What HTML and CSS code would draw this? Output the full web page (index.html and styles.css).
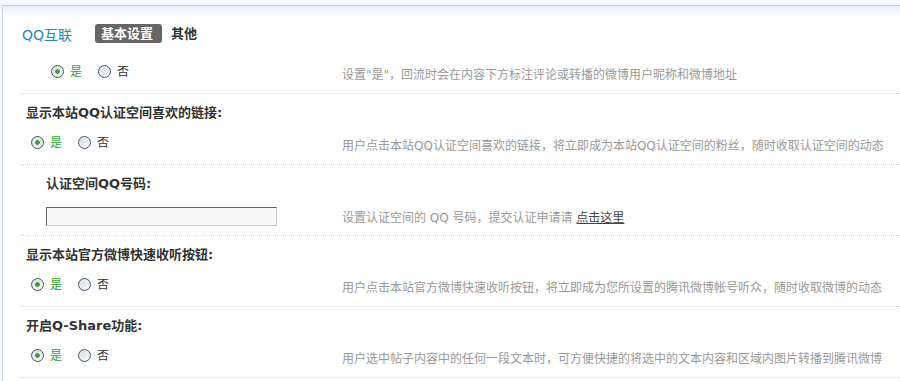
FILE: index.html
```html
<!DOCTYPE html>
<html lang="zh-cn">
  <head>
    <meta charset="utf-8">
    <title>QQ互联 - 基本设置</title>
    <link rel="stylesheet" href="styles.css">
  </head>
  <body>
    <div class="panel">
      <div class="head">
        <span class="title">QQ互联</span>
        <a class="tab current" href="#">基本设置</a>
        <a class="tab" href="#">其他</a>
      </div>

      <div class="item sub nolabel">
        <div class="row">
          <div class="ctrl">
            <label class="yes"><input type="radio" name="feed" checked>是</label>
            <label><input type="radio" name="feed">否</label>
          </div>
          <div class="tip">设置"是"，回流时会在内容下方标注评论或转播的微博用户昵称和微博地址</div>
        </div>
      </div>

      <div class="item">
        <div class="label">显示本站QQ认证空间喜欢的链接:</div>
        <div class="row">
          <div class="ctrl">
            <label class="yes"><input type="radio" name="like" checked>是</label>
            <label><input type="radio" name="like">否</label>
          </div>
          <div class="tip">用户点击本站QQ认证空间喜欢的链接，将立即成为本站QQ认证空间的粉丝，随时收取认证空间的动态</div>
        </div>
      </div>

      <div class="item sub">
        <div class="label">认证空间QQ号码:</div>
        <div class="row field">
          <div class="ctrl">
            <input class="txt" type="text" name="qq">
          </div>
          <div class="tip">设置认证空间的 QQ 号码，提交认证申请请 <a href="#">点击这里</a></div>
        </div>
      </div>

      <div class="item">
        <div class="label">显示本站官方微博快速收听按钮:</div>
        <div class="row">
          <div class="ctrl">
            <label class="yes"><input type="radio" name="follow" checked>是</label>
            <label><input type="radio" name="follow">否</label>
          </div>
          <div class="tip">用户点击本站官方微博快速收听按钮，将立即成为您所设置的腾讯微博帐号听众，随时收取微博的动态</div>
        </div>
      </div>

      <div class="item">
        <div class="label">开启Q-Share功能:</div>
        <div class="row">
          <div class="ctrl">
            <label class="yes"><input type="radio" name="share" checked>是</label>
            <label><input type="radio" name="share">否</label>
          </div>
          <div class="tip">用户选中帖子内容中的任何一段文本时，可方便快捷的将选中的文本内容和区域内图片转播到腾讯微博</div>
        </div>
      </div>
    </div>
  </body>
</html>
```

FILE: styles.css
```css
body {
    margin: 0;
    background: #f3f8fb;
    color: #333;
    font-size: 12px;
    font-family: "DejaVu Sans", "Noto Sans CJK SC", sans-serif;
    overflow: hidden;
}

a {
    text-decoration: none;
}

.panel {
    margin: 5px 0 0 2px;
    padding-left: 17px;
    min-height: calc(100vh - 6px);
    border-top: 1px solid #b6d2dc;
    border-left: 1px solid #c4d8e1;
    background: linear-gradient(#e4f0f7, #fff 12px);
}

.head {
    display: flex;
    align-items: center;
    height: 19px;
    padding: 18px 0 0 2px;
}

.head .title {
    color: #2889b2;
    font-size: 14px;
    margin-right: 23px;
}

.tab {
    color: #333;
    font-size: 13px;
    font-weight: bold;
    line-height: 19px;
    padding: 0 9px 0 6px;
    margin-right: 0;
    border-radius: 3px;
}

.tab.current {
    background: #666;
    color: white;
    margin-right: 3px;
}

.item {
    padding-top: 10px;
    border-bottom: 1px dotted #d6d6d6;
}

.item.nolabel {
    padding-top: 18px;
}

.item .label {
    height: 18px;
    line-height: 18px;
    padding-left: 6px;
    font-size: 13px;
    font-weight: bold;
}

.item.sub .label {
    padding-left: 26px;
}

.row {
    display: grid;
    grid-template-columns: 322px 1fr;
    align-items: center;
    height: 20px;
    margin-top: 10px;
    padding-bottom: 12px;
}

.item.nolabel .row {
    margin-top: 0;
}

.row.field {
    height: 19px;
    margin-top: 14px;
    padding-bottom: 9px;
}

.ctrl {
    display: flex;
    align-items: center;
    padding-left: 6px;
}

.item.sub .ctrl {
    padding-left: 26px;
}

.ctrl label {
    display: flex;
    align-items: center;
    margin-right: 11px;
    line-height: 20px;
}

.ctrl label.yes {
    color: #2fa42f;
}

input[type=radio] {
    appearance: none;
    -webkit-appearance: none;
    width: 13px;
    height: 13px;
    margin: 0 6px 0 5px;
    border: 1px solid #42566b;
    border-radius: 50%;
    background: linear-gradient(135deg, #d6dae0, #fbfbfb);
}

input[type=radio]:checked {
    background: radial-gradient(circle, #3a9c3a 0, #3a9c3a 2px, transparent 2.6px),
        linear-gradient(135deg, #d6dae0, #fbfbfb);
}

.txt {
    box-sizing: border-box;
    width: 231px;
    height: 19px;
    margin: 0;
    padding: 0 3px;
    background: #f8f8f8;
    border: 1px solid #ccc;
    border-top-color: #666;
    border-left-color: #666;
}

.tip {
    color: #999;
    font-size: 12px;
    padding-top: 4px;
    white-space: nowrap;
}

.row.field .tip {
    padding-top: 0;
}

.tip a {
    color: #444;
    text-decoration: underline;
}
```
